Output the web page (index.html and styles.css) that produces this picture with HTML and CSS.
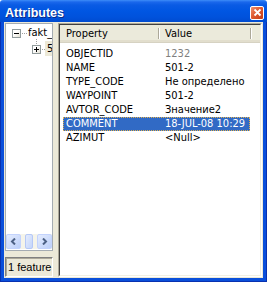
FILE: index.html
```html
<!DOCTYPE html>
<html>
<head>
<meta charset="utf-8">
<link rel="stylesheet" href="styles.css">
</head>
<body>
<div class="window">
  <div class="titlebar">
    <span class="title">Attributes</span>
    <span class="close">
      <svg width="13" height="13" viewBox="0 0 13 13">
        <path d="M3.5 3.5 L9.5 9.5 M9.5 3.5 L3.5 9.5" stroke="#fff" stroke-width="1.8" fill="none"/>
      </svg>
    </span>
  </div>
  <div class="frame">
    <div class="client">
      <div class="left">
        <div class="tree">
          <div class="tree-body">
            <div class="node n1">
              <span class="box"><span class="minus"></span></span>
              <span class="hdots"></span>
              <span class="label">fakt_</span>
            </div>
            <div class="node n2">
              <span class="vdots"></span>
              <span class="box"><span class="minus"></span><span class="plus"></span></span>
              <span class="hdots short"></span>
              <span class="label sel">5</span>
            </div>
          </div>
          <div class="hscroll">
            <span class="sbtn">
              <svg width="7" height="7" viewBox="0 0 7 7"><path d="M5 0.5 L2 3.5 L5 6.5" stroke="#4D6185" stroke-width="2" fill="none"/></svg>
            </span>
            <span class="track"><span class="thumb"></span></span>
            <span class="sbtn">
              <svg width="7" height="7" viewBox="0 0 7 7"><path d="M2 0.5 L5 3.5 L2 6.5" stroke="#4D6185" stroke-width="2" fill="none"/></svg>
            </span>
          </div>
        </div>
        <div class="status">1 feature</div>
      </div>
      <div class="splitter"></div>
      <div class="list">
        <div class="list-inner">
          <div class="header">
            <div class="hcol hc1">Property</div>
            <div class="hcol hc2">Value</div>
            <div class="hcol hc3"></div>
          </div>
          <div class="rows">
            <div class="row"><span class="c1">OBJECTID</span><span class="c2 ro">1232</span></div>
            <div class="row"><span class="c1">NAME</span><span class="c2">501-2</span></div>
            <div class="row"><span class="c1">TYPE_CODE</span><span class="c2">Не определено</span></div>
            <div class="row"><span class="c1">WAYPOINT</span><span class="c2">501-2</span></div>
            <div class="row"><span class="c1">AVTOR_CODE</span><span class="c2">Значение2</span></div>
            <div class="row selected"><span class="c1">COMMENT</span><span class="c2">18-JUL-08 10:29</span></div>
            <div class="row"><span class="c1">AZIMUT</span><span class="c2">&lt;Null&gt;</span></div>
          </div>
        </div>
      </div>
    </div>
  </div>
</div>
</body>
</html>
```
FILE: styles.css
```css
* { box-sizing: border-box; }
html, body { margin: 0; padding: 0; background: #fff; }
body {
  font-family: "DejaVu Sans Condensed", "DejaVu Sans", sans-serif;
  font-stretch: condensed;
  font-size: 11px;
  color: #000;
}
.window {
  width: 267px;
  height: 282px;
  display: flex;
  flex-direction: column;
}
.titlebar {
  height: 22px;
  flex: none;
  display: flex;
  align-items: center;
  justify-content: space-between;
  padding: 0 5px 0 5px;
  background: linear-gradient(to bottom, #3D8DF8 0px, #1A68EC 2px, #0A5BE4 5px, #0056E2 11px, #0052DC 17px, #004BD0 22px);
  border-radius: 3px 3px 0 0;
}
.title {
  font-family: "Liberation Sans", Arial, sans-serif;
  font-stretch: normal;
  font-weight: bold;
  font-size: 12.5px;
  color: #fff;
  text-shadow: 1px 1px 0 #0A2A8A;
  padding-top: 3px;
}
.close {
  width: 14px;
  height: 14px;
  margin-right: -2px;
  margin-top: 3px;
  border: 1px solid #fff;
  border-radius: 2px;
  background: linear-gradient(to bottom right, #EE9070 0%, #E05A30 45%, #C23C16 100%);
  display: flex;
  align-items: center;
  justify-content: center;
  position: relative;
}
.close svg { position: absolute; left: -0.5px; top: -0.5px; }
.frame {
  flex: 1;
  display: flex;
  background: #0A4FDA;
  padding: 0 4px 4px 4px;
  box-shadow: inset 1px 0 0 #0831B0, inset -1px 0 0 #0831B0, inset 0 -1px 0 #0831B0;
}
.client {
  flex: 1;
  display: flex;
  background: #ECE9D8;
  padding: 1px;
}
.left {
  width: 48px;
  flex: none;
  display: flex;
  flex-direction: column;
}
.tree {
  flex: 1;
  background: #fff;
  border: 1px solid #A5ACB2;
  display: flex;
  flex-direction: column;
  overflow: hidden;
}
.tree-body {
  flex: 1;
  padding-top: 1px;
}
.node {
  position: relative;
  height: 16px;
  line-height: 16px;
  white-space: nowrap;
}
.node .box {
  position: absolute;
  top: 4px;
  width: 9px;
  height: 9px;
  border: 1px solid #919B9C;
  background: linear-gradient(to bottom right, #fff 40%, #E3E0D2);
}
.n1 .box { left: 6px; }
.n2 .box { left: 26px; }
.minus {
  position: absolute;
  left: 1px; top: 3px;
  width: 5px; height: 1px;
  background: #000;
}
.plus {
  position: absolute;
  left: 3px; top: 1px;
  width: 1px; height: 5px;
  background: #000;
}
.hdots {
  position: absolute;
  top: 8px;
  left: 16px;
  width: 6px;
  height: 1px;
  background: repeating-linear-gradient(to right, #A0A0A0 0 1px, transparent 1px 2px);
}
.n2 .hdots { left: 36px; width: 4px; }
.vdots {
  position: absolute;
  left: 30px;
  top: -2px;
  width: 1px;
  height: 6px;
  background: repeating-linear-gradient(to bottom, #A0A0A0 0 1px, transparent 1px 2px);
}
.label {
  position: absolute;
  top: 0;
}
.n1 .label { left: 22px; }
.n2 .label { left: 39px; padding: 0 2px; height: 15px; line-height: 15px; }
.label.sel { background: #ECE9D8; }
.hscroll {
  height: 15px;
  flex: none;
  display: flex;
  background: #F5F4EA;
  margin-bottom: 1px;
}
.sbtn {
  width: 15px;
  flex: none;
  border: 1px solid #C3D3FD;
  border-radius: 2px;
  background: linear-gradient(to bottom right, #E4ECFE, #BCCFF9);
  display: flex;
  align-items: center;
  justify-content: center;
}
.track {
  flex: 1;
  display: flex;
  justify-content: center;
  padding: 0 1px;
}
.thumb {
  width: 8px;
  border: 1px solid #B5C8F7;
  border-radius: 2px;
  background: linear-gradient(to bottom right, #E4ECFE, #C4D5FA);
}
.status {
  height: 20px;
  flex: none;
  margin-top: 6px;
  border: 1px solid;
  border-color: #808080 #fff #fff #808080;
  box-shadow: inset 1px 1px 0 #ACA899;
  font-family: "Liberation Sans", Arial, sans-serif;
  font-stretch: normal;
  font-size: 11px;
  line-height: 18px;
  padding-left: 2px;
  white-space: nowrap;
  overflow: hidden;
}
.splitter {
  width: 5px;
  flex: none;
}
.list {
  flex: 1;
  display: flex;
  border: 1px solid;
  border-color: #ACA899 #fff #fff #ACA899;
}
.list-inner {
  flex: 1;
  background: #fff;
  border: 1px solid;
  border-color: #404040 #F1EFE2 #F1EFE2 #404040;
  overflow: hidden;
}
.header {
  height: 18px;
  display: flex;
  background: #EBEADB;
  border-bottom: 1px solid #D6D2C2;
  box-shadow: inset 0 -2px 0 #E2DECD;
}
.hcol {
  position: relative;
  line-height: 17px;
  padding-left: 6px;
  white-space: nowrap;
}
.hcol::after {
  content: "";
  position: absolute;
  right: 0;
  top: 3px;
  bottom: 3px;
  width: 1px;
  background: #ACA899;
  box-shadow: 1px 0 0 #fff;
}
.hc1 { width: 99px; }
.hc2 { width: 92px; }
.hc3 { flex: 1; }
.hc3::after { display: none; }
.rows { padding-top: 4px; }
.row {
  display: flex;
  height: 14px;
  line-height: 14px;
  width: 187px;
  margin-left: 3px;
  white-space: nowrap;
}
.c1 { width: 102px; padding-left: 3px; flex: none; }
.c2 { flex: 1; }
.ro { color: #7F7F7F; }
.row.selected {
  background: #316AC5;
  color: #fff;
  outline: 1px dotted #E0B050;
  outline-offset: -1px;
}
```
